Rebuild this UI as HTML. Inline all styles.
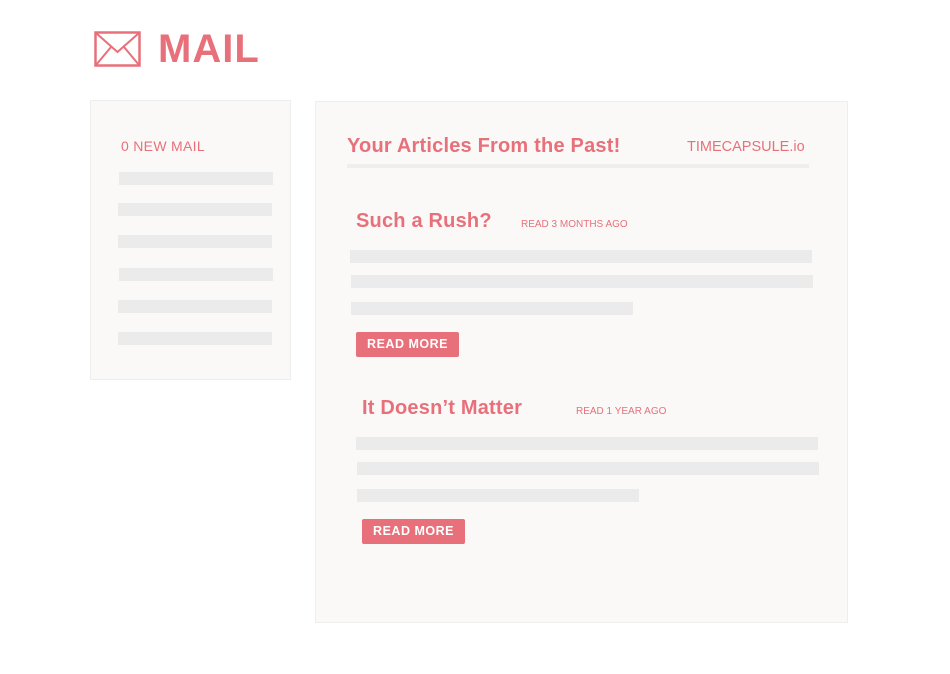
<html><head><style>
body{margin:0;width:950px;height:674px;background:#fff;position:relative;overflow:hidden;font-family:"Liberation Sans",sans-serif;color:#e8707a}
.a{position:absolute}
.p{background:#faf9f8;border:1px solid #f0eeec;box-sizing:border-box}
.b{position:absolute;background:#ebebeb;height:13px}
.btn{position:absolute;background:#e8707a;color:#fff;font-size:12.5px;font-weight:bold;letter-spacing:.5px;text-align:center;line-height:25px;height:25px;width:103px;border-radius:2px}
.t{position:absolute;font-size:20px;font-weight:bold;white-space:nowrap;letter-spacing:.2px}
.s{position:absolute;font-size:10px;white-space:nowrap}
</style></head><body>
<svg class="a" style="left:94px;top:31px" width="48" height="37" viewBox="0 0 48 37"><rect x="1.5" y="1.5" width="44" height="33" fill="none" stroke="#e8707a" stroke-width="2.5"/><path d="M2 2 L23.5 21 L45 2 M2 34 L17 16 M45 34 L30 16" fill="none" stroke="#e8707a" stroke-width="2"/></svg>
<div class="a" style="left:158px;top:27px;font-size:40px;font-weight:bold;letter-spacing:1px">MAIL</div>
<div class="a p" style="left:90px;top:100px;width:201px;height:280px"></div>
<div class="a" style="left:121px;top:138px;font-size:14px;letter-spacing:.3px">0 NEW MAIL</div>
<div class="b" style="left:119px;top:172px;width:154px"></div>
<div class="b" style="left:118px;top:203px;width:154px"></div>
<div class="b" style="left:118px;top:235px;width:154px"></div>
<div class="b" style="left:119px;top:268px;width:154px"></div>
<div class="b" style="left:118px;top:300px;width:154px"></div>
<div class="b" style="left:118px;top:332px;width:154px"></div>
<div class="a p" style="left:315px;top:101px;width:533px;height:522px"></div>
<div class="t" style="left:347px;top:135px">Your Articles From the Past!</div>
<div class="a" style="left:687px;top:139px;font-size:14.5px">TIMECAPSULE.io</div>
<div class="a" style="left:347px;top:164px;width:462px;height:4px;background:#efeeed"></div>
<div class="t" style="left:356px;top:210px">Such a Rush?</div>
<div class="s" style="left:521px;top:219px">READ 3 MONTHS AGO</div>
<div class="b" style="left:350px;top:250px;width:462px"></div>
<div class="b" style="left:351px;top:275px;width:462px"></div>
<div class="b" style="left:351px;top:302px;width:282px"></div>
<div class="btn" style="left:356px;top:332px">READ MORE</div>
<div class="t" style="left:362px;top:397px">It Doesn’t Matter</div>
<div class="s" style="left:576px;top:406px">READ 1 YEAR AGO</div>
<div class="b" style="left:356px;top:437px;width:462px"></div>
<div class="b" style="left:357px;top:462px;width:462px"></div>
<div class="b" style="left:357px;top:489px;width:282px"></div>
<div class="btn" style="left:362px;top:519px">READ MORE</div>
</body></html>
